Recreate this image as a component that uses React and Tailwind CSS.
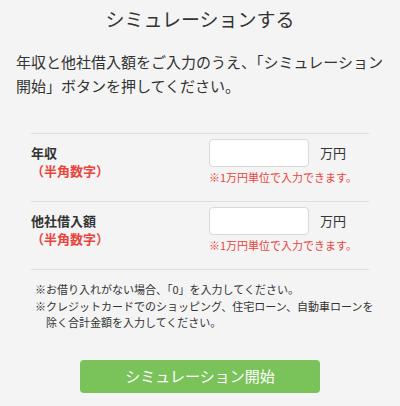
export default function App() {
  const font = { fontFamily: '"Noto Sans CJK JP", "Noto Sans", sans-serif' };

  const rows = [
    { label: "年収" },
    { label: "他社借入額" },
  ];

  return (
    <div className="w-[400px] h-[406px] bg-[#f4f4f4] text-[#333] overflow-hidden" style={font}>
      {/* title */}
      <h1 className="pt-[6px] text-center text-[19px] leading-[26px] font-normal">
        シミュレーションする
      </h1>

      {/* intro */}
      <p className="mt-[18px] px-[16px] text-[15px] leading-[24px]">
        年収と他社借入額をご入力のうえ、「シミュレーション開始」ボタンを押してください。
      </p>

      {/* form */}
      <div className="mt-[35px] mx-[31px] border-t border-[#dedede]">
        {rows.map((r) => (
          <div key={r.label} className="flex pt-[5px] pb-[16px] border-b border-[#dedede]">
            <div className="w-[178px] pt-[5px] leading-[18px] font-bold text-[13px]">
              <div>{r.label}</div>
              <div className="text-[#e8453c]">（半角数字）</div>
            </div>
            <div>
              <div className="flex items-center">
                <input
                  type="text"
                  className="w-[100px] h-[28px] bg-white border border-[#d9d9d9] rounded-[4px] outline-none"
                />
                <span className="ml-[11px] text-[13px]">万円</span>
              </div>
              <div className="mt-[2px] text-[11px] leading-[16px] text-[#e8453c]">
                ※1万円単位で入力できます。
              </div>
            </div>
          </div>
        ))}
      </div>

      {/* notes */}
      <div className="mt-[11px] ml-[35px] mr-[18px] text-[11px] leading-[16px]">
        <p>※お借り入れがない場合、「0」を入力してください。</p>
        <p className="mt-[1px] pl-[11px] -indent-[11px]">
          ※クレジットカードでのショッピング、住宅ローン、自動車ローンを除く合計金額を入力してください。
        </p>
      </div>

      {/* button */}
      <button className="block mx-auto mt-[30px] w-[240px] h-[33px] rounded-[4px] bg-[#7ac35a] text-white text-[15px]">
        シミュレーション開始
      </button>
    </div>
  );
}
